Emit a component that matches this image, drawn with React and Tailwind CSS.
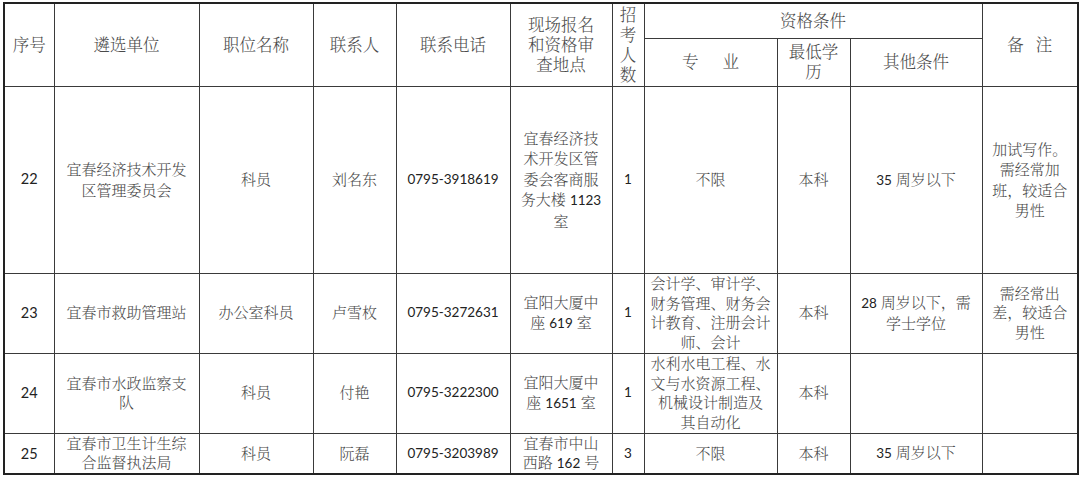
const N = ({ children }) => <span className="text-[13.5px] font-normal text-[#222]">{children}</span>;

const rows = [
  {
    no: "22",
    unit: ["宜春经济技术开发", "区管理委员会"],
    post: ["科员"],
    contact: "刘名东",
    phone: "0795-3918619",
    place: [
      "宜春经济技",
      "术开发区管",
      "委会客商服",
      <>务大楼 <N>1123</N></>,
      "室",
    ],
    num: "1",
    major: ["不限"],
    edu: "本科",
    other: [<><N>35</N> 周岁以下</>],
    note: ["加试写作。", "需经常加", "班，较适合", "男性"],
    h: "h-[187px]",
    lh: "leading-[20.5px]",
  },
  {
    no: "23",
    unit: ["宜春市救助管理站"],
    post: ["办公室科员"],
    contact: "卢雪枚",
    phone: "0795-3272631",
    place: ["宜阳大厦中", <>座 <N>619</N> 室</>],
    num: "1",
    major: ["会计学、审计学、", "财务管理、财务会", "计教育、注册会计", "师、会计"],
    edu: "本科",
    other: [<><N>28</N> 周岁以下，需</>, "学士学位"],
    note: ["需经常出", "差，较适合", "男性"],
    h: "h-[80px]",
    lh: "leading-[19.5px]",
  },
  {
    no: "24",
    unit: ["宜春市水政监察支", "队"],
    post: ["科员"],
    contact: "付艳",
    phone: "0795-3222300",
    place: ["宜阳大厦中", <>座 <N>1651</N> 室</>],
    num: "1",
    major: ["水利水电工程、水", "文与水资源工程、", "机械设计制造及", "其自动化"],
    edu: "本科",
    other: [],
    note: [],
    h: "h-[80px]",
    lh: "leading-[19.5px]",
  },
  {
    no: "25",
    unit: ["宜春市卫生计生综", "合监督执法局"],
    post: ["科员"],
    contact: "阮磊",
    phone: "0795-3203989",
    place: ["宜春市中山", <>西路 <N>162</N> 号</>],
    num: "3",
    major: ["不限"],
    edu: "本科",
    other: [<><N>35</N> 周岁以下</>],
    note: [],
    h: "h-[40px]",
    lh: "leading-[19px]",
  },
];

function Lines({ items }) {
  return items.map((t, i) => (
    <div key={i} className="whitespace-nowrap">
      {t}
    </div>
  ));
}

const cell = "border border-[#3a3a3a] px-0 py-0 text-center align-middle";
const head = cell + " text-[16.5px] leading-[20px] font-light";

export default function App() {
  return (
    <div className="w-[1080px] h-[480px] bg-white pt-[2px] pl-[3px] overflow-hidden">
      <table className="table-fixed border-collapse border-2 border-[#222] w-[1074px] text-[#4a4a4a] font-light font-['Lato','Noto_Serif_CJK_SC','Noto_Sans_CJK_SC',sans-serif]">
        <colgroup>
          <col className="w-[50px]" />
          <col className="w-[145px]" />
          <col className="w-[114px]" />
          <col className="w-[83px]" />
          <col className="w-[114px]" />
          <col className="w-[102px]" />
          <col className="w-[32px]" />
          <col className="w-[133px]" />
          <col className="w-[73px]" />
          <col className="w-[132px]" />
          <col className="w-[96px]" />
        </colgroup>
        <thead>
          <tr className="h-[35px]">
            <th rowSpan={2} className={head}>序号</th>
            <th rowSpan={2} className={head}>遴选单位</th>
            <th rowSpan={2} className={head}>职位名称</th>
            <th rowSpan={2} className={head}>联系人</th>
            <th rowSpan={2} className={head}>联系电话</th>
            <th rowSpan={2} className={head}>
              <Lines items={["现场报名", "和资格审", "查地点"]} />
            </th>
            <th rowSpan={2} className={head + " leading-[20.5px]"}>
              <Lines items={["招", "考", "人", "数"]} />
            </th>
            <th colSpan={3} className={head}>资格条件</th>
            <th rowSpan={2} className={head}>
              备<span className="inline-block w-[12px]" />注
            </th>
          </tr>
          <tr className="h-[48px]">
            <th className={head}>
              专<span className="inline-block w-[24px]" />业
            </th>
            <th className={head}>
              <Lines items={["最低学", "历"]} />
            </th>
            <th className={head}>其他条件</th>
          </tr>
        </thead>
        <tbody className="text-[15px]">
          {rows.map((r) => (
            <tr key={r.no} className={r.h + " " + r.lh}>
              <td className={cell + " text-[14.5px] font-normal text-[#222]"}>{r.no}</td>
              <td className={cell}><Lines items={r.unit} /></td>
              <td className={cell}><Lines items={r.post} /></td>
              <td className={cell}>{r.contact}</td>
              <td className={cell + " text-[13.5px] font-normal text-[#222]"}>{r.phone}</td>
              <td className={cell}><Lines items={r.place} /></td>
              <td className={cell + " text-[13.5px] font-normal text-[#222]"}>{r.num}</td>
              <td className={cell}><Lines items={r.major} /></td>
              <td className={cell}>{r.edu}</td>
              <td className={cell}><Lines items={r.other} /></td>
              <td className={cell}><Lines items={r.note} /></td>
            </tr>
          ))}
        </tbody>
      </table>
    </div>
  );
}
